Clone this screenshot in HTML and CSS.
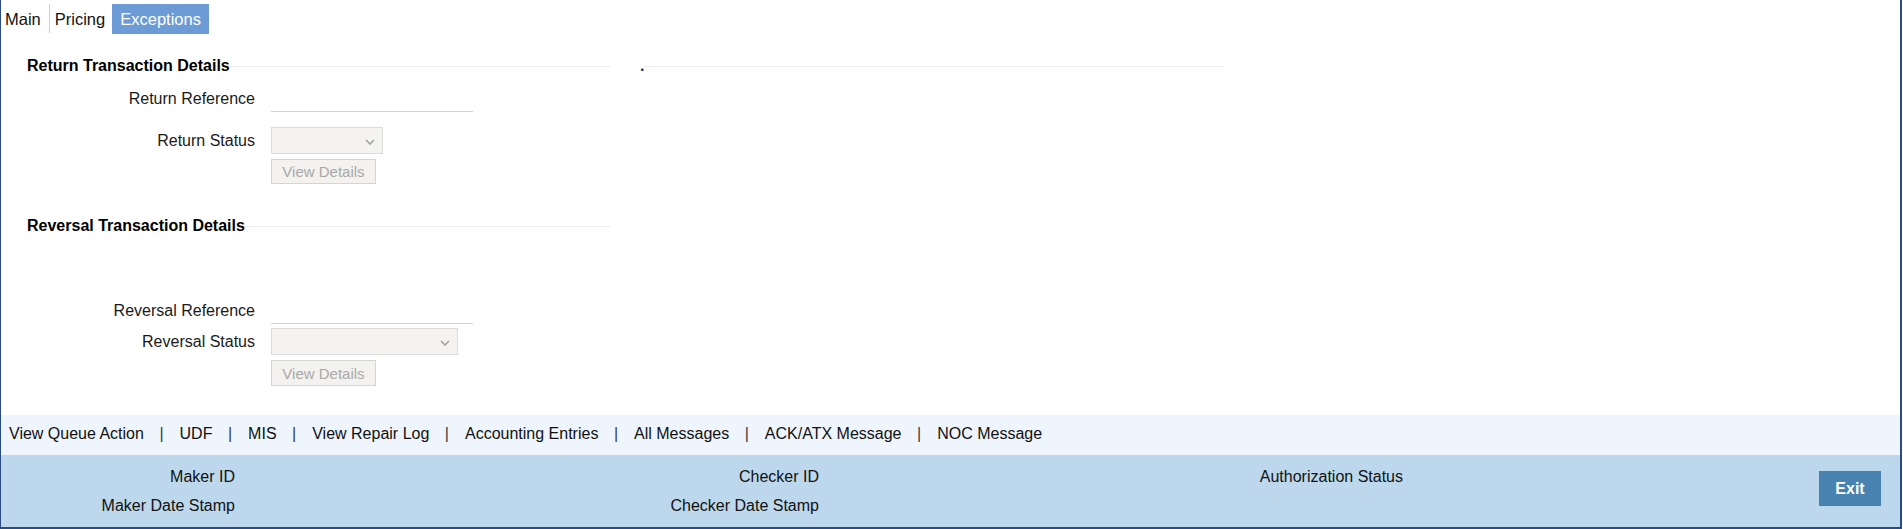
FILE: index.html
```html
<!DOCTYPE html>
<html lang="en">
<head>
<meta charset="utf-8">
<title>Exceptions</title>
<link rel="stylesheet" href="styles.css">
</head>
<body>
<div class="frame">
  <nav class="tabs">
    <a class="tab tab-main">Main</a>
    <a class="tab tab-pricing">Pricing</a>
    <a class="tab tab-active">Exceptions</a>
  </nav>

  <main class="content">
    <section class="col col-left">
      <div class="sec-head"><span class="sec-title">Return Transaction Details</span><i class="rule"></i></div>

      <div class="row row-ref1">
        <label class="lbl">Return Reference</label>
        <span class="input-line"></span>
      </div>
      <div class="row row-sel1">
        <label class="lbl">Return Status</label>
        <span class="select select-sm"><svg class="chev" width="10" height="6" viewBox="0 0 10 6"><polyline points="1,1 5,5 9,1" fill="none" stroke="#a0a4a4" stroke-width="1.6"/></svg></span>
      </div>
      <div class="row row-btn1">
        <span class="lbl"></span>
        <button class="btn">View Details</button>
      </div>

      <div class="sec-head sec-head-2"><span class="sec-title">Reversal Transaction Details</span><i class="rule"></i></div>

      <div class="row row-ref2">
        <label class="lbl">Reversal Reference</label>
        <span class="input-line input-line-2"></span>
      </div>
      <div class="row row-sel2">
        <label class="lbl">Reversal Status</label>
        <span class="select select-lg"><svg class="chev" width="10" height="6" viewBox="0 0 10 6"><polyline points="1,1 5,5 9,1" fill="none" stroke="#a0a4a4" stroke-width="1.6"/></svg></span>
      </div>
      <div class="row row-btn2">
        <span class="lbl"></span>
        <button class="btn">View Details</button>
      </div>
    </section>

    <section class="col col-right">
      <div class="sec-head"><span class="sec-title dot">.</span><i class="rule"></i></div>
    </section>
  </main>

  <div class="links">
    <a class="link">View Queue Action</a><span class="sep">|</span>
    <a class="link">UDF</a><span class="sep">|</span>
    <a class="link">MIS</a><span class="sep">|</span>
    <a class="link">View Repair Log</a><span class="sep">|</span>
    <a class="link">Accounting Entries</a><span class="sep">|</span>
    <a class="link">All Messages</a><span class="sep">|</span>
    <a class="link">ACK/ATX Message</a><span class="sep">|</span>
    <a class="link">NOC Message</a>
  </div>

  <footer class="audit">
    <div class="audit-grid">
      <div class="audit-col">
        <div class="audit-row">Maker ID</div>
        <div class="audit-row">Maker Date Stamp</div>
      </div>
      <div class="audit-col">
        <div class="audit-row">Checker ID</div>
        <div class="audit-row">Checker Date Stamp</div>
      </div>
      <div class="audit-col">
        <div class="audit-row">Authorization Status</div>
      </div>
    </div>
    <button class="exit">Exit</button>
  </footer>
</div>
</body>
</html>
```

FILE: styles.css
```css
* { box-sizing: border-box; }

html, body {
  margin: 0;
  padding: 0;
  background: #ffffff;
}

body {
  width: 1903px;
  height: 529px;
  overflow: hidden;
  font-family: "Liberation Sans", Arial, sans-serif;
  font-size: 16px;
  color: #1a1a1a;
}

.frame {
  width: 1902px;
  height: 529px;
  border-left: 1px solid #2b4c83;
  border-right: 2px solid #2b4c83;
  border-bottom: 2px solid #2b4c83;
  display: flex;
  flex-direction: column;
}

/* Tabs */
.tabs {
  display: flex;
  height: 34px;
  padding-top: 4px;
}

.tab {
  height: 30px;
  line-height: 30px;
  font-size: 16.5px;
  color: #111111;
}

.tab-main {
  padding: 0 8px 0 4px;
}

.tab-pricing {
  padding: 0 7px 0 5px;
  border-left: 1px solid #cfcfcf;
  height: 29px;
}

.tab-active {
  padding: 0 8px;
  background: #6c9bd5;
  color: #ffffff;
}

/* Content */
.content {
  height: 381px;
  display: flex;
}

.col-left {
  width: 609px;
  padding-left: 26px;
  padding-top: 22px;
}

.col-right {
  width: 584px;
  margin-left: 30px;
  padding-top: 22px;
}

.sec-head {
  display: flex;
  align-items: center;
  height: 20px;
  line-height: 20px;
  font-weight: bold;
  font-size: 16px;
  color: #000000;
}

.sec-head-2 {
  margin-top: 32px;
}

.rule {
  flex: 1;
  height: 1px;
  background: #ebebeb;
}

.dot {
  color: #1b2f55;
}

.row {
  display: flex;
  align-items: center;
}

.lbl {
  width: 228px;
  margin-right: 16px;
  text-align: right;
  line-height: 18px;
  color: #1a1a1a;
}

.row-ref1 { margin-top: 9px; height: 27px; }
.row-sel1 { margin-top: 15px; height: 27px; }
.row-btn1 { margin-top: 5px; height: 25px; }
.row-ref2 { margin-top: 62px; height: 26px; }
.row-sel2 { margin-top: 4px; height: 27px; }
.row-btn2 { margin-top: 5px; height: 26px; }

.input-line {
  align-self: stretch;
  width: 202px;
  border-bottom: 1px solid #d2d2d2;
}

.select {
  height: 27px;
  border: 1px solid #dcdcdc;
  background: #f4f3ef;
  display: flex;
  align-items: center;
  justify-content: flex-end;
  padding-right: 7px;
  padding-top: 2px;
}

.select-sm { width: 112px; }
.select-lg { width: 187px; }

.btn {
  width: 105px;
  height: 100%;
  padding: 0;
  border: 1px solid #d4d4d4;
  background: #f3f2ee;
  color: #a9a9a9;
  font-family: "Liberation Sans", Arial, sans-serif;
  font-size: 15px;
}

/* Links bar */
.links {
  height: 40px;
  background: #eef5fd;
  display: flex;
  align-items: center;
  padding-left: 8px;
  padding-bottom: 2px;
  color: #111111;
}

.sep {
  margin: 0 16px 0 15.5px;
  color: #3a3a3a;
}

/* Audit bar */
.audit {
  height: 72px;
  background: #bdd8ec;
  display: flex;
}

.audit-grid {
  display: grid;
  grid-template-columns: repeat(3, 584px);
  padding-top: 7px;
}

.audit-col {
  display: flex;
  flex-direction: column;
}

.audit-row {
  width: 234px;
  height: 29px;
  line-height: 29px;
  text-align: right;
  color: #111111;
}

.exit {
  margin-left: auto;
  margin-right: 19px;
  margin-top: 16px;
  width: 62px;
  height: 35px;
  padding: 0;
  border: 0;
  background: #4782b0;
  color: #ffffff;
  font-family: "Liberation Sans", Arial, sans-serif;
  font-weight: bold;
  font-size: 16px;
}
```
